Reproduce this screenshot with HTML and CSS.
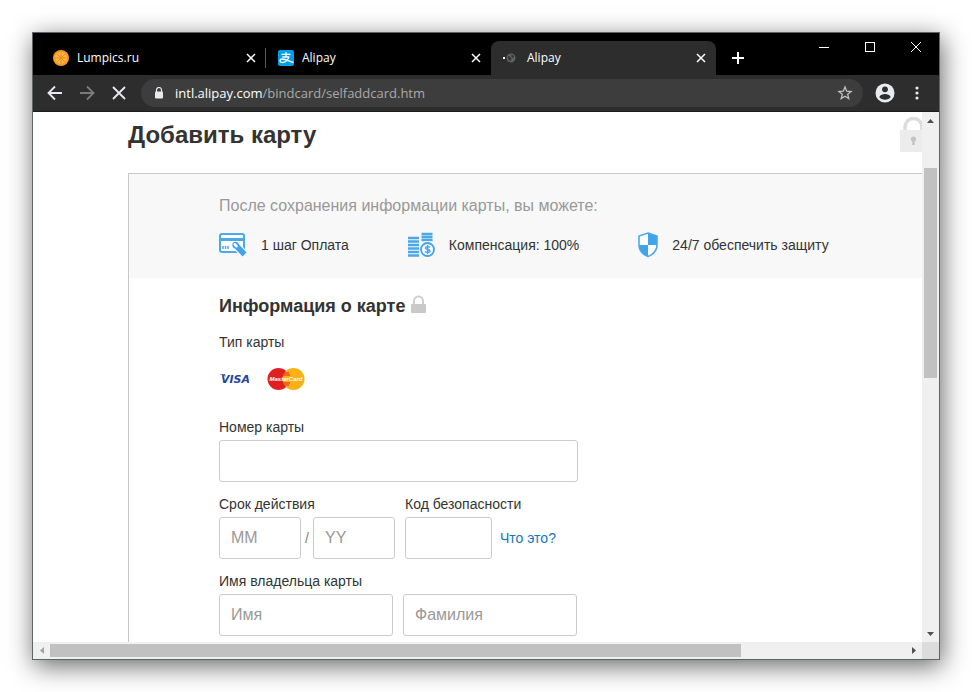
FILE: index.html
```html
<!DOCTYPE html>
<html lang="ru">
<head>
    <meta charset="UTF-8">
    <meta name="viewport" content="width=device-width, initial-scale=1.0">
    <title>Alipay</title>
    <link rel="stylesheet" href="styles.css">
</head>
<body>
    <div class="window">
        <div class="tab-strip">
            <div class="tabs">
                <div class="tab tab-divided">
                    <svg class="favicon" viewBox="0 0 16 16">
                        <circle cx="8" cy="8" r="8" fill="#f9981f"/>
                        <circle cx="8" cy="8" r="6" fill="#ffb64a"/>
                        <path d="M8 2v12M2 8h12M3.8 3.8l8.4 8.4M12.2 3.8l-8.4 8.4" stroke="#f08a10" stroke-width="1"/>
                    </svg>
                    <span class="tab-title">Lumpics.ru</span>
                    <button class="tab-close" aria-label="Закрыть вкладку">
                        <svg width="16" height="16" viewBox="0 0 16 16"><path d="M4 4l8 8M12 4l-8 8"/></svg>
                    </button>
                </div>
                <div class="tab">
                    <svg class="favicon" viewBox="0 0 16 16">
                        <rect width="16" height="16" rx="2" fill="#009fe8"/>
                        <path d="M3.5 4.3h9M8 2v5M4.3 7h7M11 7c-1 2.8-3.8 5.5-6.5 5.5-3.5 0-3-3.5 0-3.5 3 0 6.5 2.2 11 3.6" fill="none" stroke="#fff" stroke-width="1.3"/>
                    </svg>
                    <span class="tab-title">Alipay</span>
                    <button class="tab-close" aria-label="Закрыть вкладку">
                        <svg width="16" height="16" viewBox="0 0 16 16"><path d="M4 4l8 8M12 4l-8 8"/></svg>
                    </button>
                </div>
                <div class="tab tab-active">
                    <svg class="favicon" viewBox="0 0 16 16">
                        <rect x="0" y="7" width="2" height="2" fill="#fff"/>
                        <circle cx="8" cy="8" r="4.5" fill="#5f6163"/>
                        <path d="M5 6l2.5 1 1 2-1 2-2.5-2zM8.5 4.5l2.5 1.5-.5 2-2-1z" fill="#333435"/>
                    </svg>
                    <span class="tab-title">Alipay</span>
                    <button class="tab-close" aria-label="Закрыть вкладку">
                        <svg width="16" height="16" viewBox="0 0 16 16"><path d="M4 4l8 8M12 4l-8 8"/></svg>
                    </button>
                </div>
            </div>
            <button class="new-tab" aria-label="Новая вкладка">
                <svg width="16" height="16" viewBox="0 0 16 16"><path d="M8 2v12M2 8h12" stroke="#fff" stroke-width="2"/></svg>
            </button>
            <div class="window-controls">
                <button aria-label="Свернуть"><svg width="12" height="12" viewBox="0 0 12 12"><path d="M1 6.5h10"/></svg></button>
                <button aria-label="Развернуть"><svg width="12" height="12" viewBox="0 0 12 12"><rect x="1.5" y="1.5" width="9" height="9"/></svg></button>
                <button aria-label="Закрыть"><svg width="12" height="12" viewBox="0 0 12 12"><path d="M1 1l10 10M11 1L1 11"/></svg></button>
            </div>
        </div>

        <div class="toolbar">
            <div class="nav-buttons">
                <button aria-label="Назад"><svg width="16" height="16" viewBox="0 0 16 16"><path d="M15 8H2M8 1.5L1.5 8 8 14.5"/></svg></button>
                <button aria-label="Вперёд" disabled><svg width="16" height="16" viewBox="0 0 16 16"><path d="M1 8h13M8 1.5L14.5 8 8 14.5"/></svg></button>
                <button aria-label="Остановить"><svg width="16" height="16" viewBox="0 0 16 16"><path d="M2 2l12 12M14 2L2 14"/></svg></button>
            </div>
            <div class="address-bar">
                <svg width="10" height="12" viewBox="0 0 10 12">
                    <path d="M2.5 5V3a2.5 2.5 0 0 1 5 0v2" fill="none" stroke="#e8eaed" stroke-width="1.2"/>
                    <rect x="1" y="4.5" width="8" height="7" rx="1" fill="#e8eaed"/>
                </svg>
                <span class="url"><span class="url-host">intl.alipay.com</span>/bindcard/selfaddcard.htm</span>
                <button class="bookmark" aria-label="Добавить в закладки">
                    <svg width="16" height="16" viewBox="0 0 16 16"><path d="M8 2l1.7 4.2 4.4.3-3.4 2.8 1.1 4.3L8 11.3l-3.8 2.3 1.1-4.3-3.4-2.8 4.4-.3z" fill="none" stroke="#c0c2c4" stroke-width="1.3"/></svg>
                </button>
            </div>
            <button class="profile" aria-label="Профиль">
                <svg width="20" height="20" viewBox="0 0 20 20">
                    <circle cx="10" cy="10" r="9.5" fill="#e8eaed"/>
                    <circle cx="10" cy="6.3" r="2.9" fill="#2d2d2d"/>
                    <path d="M4.3 14c1-2.2 3.5-3 5.7-3s4.7.8 5.7 3c-1.3 1.7-3.3 2.7-5.7 2.7S5.6 15.7 4.3 14z" fill="#2d2d2d"/>
                </svg>
            </button>
            <button class="menu" aria-label="Меню">
                <svg width="4" height="14" viewBox="0 0 4 14" fill="#e8eaed"><circle cx="2" cy="2" r="1.6"/><circle cx="2" cy="7" r="1.6"/><circle cx="2" cy="12" r="1.6"/></svg>
            </button>
        </div>

        <div class="viewport">
            <main class="page">
                <header class="page-header">
                    <h1>Добавить карту</h1>
                    <svg class="secure-lock" width="27" height="36" viewBox="0 0 27 36">
                        <path d="M5 14V10a8.500 8.500 0 0 1 17 0v4" fill="none" stroke="#dcdcdc" stroke-width="3.5"/>
                        <rect y="13" width="27" height="22" rx="1" fill="#ececec"/>
                        <circle cx="13.5" cy="22" r="2.6" fill="#c4c4c4"/>
                        <path d="M12.3 22h2.4v6h-2.4z" fill="#c4c4c4"/>
                    </svg>
                </header>
                <div class="panel">
                    <section class="benefits">
                        <p class="benefits-title">После сохранения информации карты, вы можете:</p>
                        <ul class="benefits-list">
                            <li>
                                <svg width="28" height="26" viewBox="0 0 28 26">
                                    <rect x="1" y="2" width="24" height="18" rx="2" fill="#fff" stroke="#4ba9ea" stroke-width="2"/>
                                    <path d="M1 7.5h24" stroke="#4ba9ea" stroke-width="3"/>
                                    <path d="M4 14v3M6.5 14v3M9 14v3" stroke="#4ba9ea" stroke-width="1.5"/>
                                    <path d="M16.5 13L25 22" stroke="#f8f8f8" stroke-width="8"/>
                                    <path d="M16.5 13L25.5 22.5" stroke="#3fa4ec" stroke-width="5.5"/>
                                    <circle cx="16.5" cy="13" r="3.2" fill="#3fa4ec"/>
                                    <path d="M15.8 12.300l1.700 1.900" stroke="#fff" stroke-width="2.6" stroke-linecap="round"/>
                                </svg>
                                1 шаг Оплата
                            </li>
                            <li>
                                <svg width="27" height="26" viewBox="0 0 27 26">
                                    <path d="M0 6h11M0 9.5h11M0 13h11M0 16.5h11M0 20h11M0 23.5h11M13.5 2h11M13.5 5h11M13.5 8h11" stroke="#4ba9ea" stroke-width="2.4"/>
                                    <circle cx="19.5" cy="17.5" r="8.5" fill="#f8f8f8"/>
                                    <circle cx="19.5" cy="17.5" r="6.5" fill="#f8f8f8" stroke="#3fa4ec" stroke-width="1.8"/>
                                    <path d="M22 15.5c-.7-1.2-4.6-1.3-4.6.5 0 2 4.6 1 4.6 3 0 1.9-4.3 1.8-5 .4M19.6 13v9" fill="none" stroke="#3fa4ec" stroke-width="1.3"/>
                                </svg>
                                Компенсация: 100%
                            </li>
                            <li>
                                <svg width="20" height="26" viewBox="0 0 20 26">
                                    <path d="M10 1l9 3v9c0 6-4 9.5-9 11.5C5 22.5 1 19 1 13V4z" fill="#fff"/>
                                    <path d="M10 1l9 3v9h-9zM10 13v11.5C5 22.5 1 19 1 13z" fill="#3fa4ec"/>
                                    <path d="M10 1l9 3v9c0 6-4 9.5-9 11.5C5 22.5 1 19 1 13V4z" fill="none" stroke="#4ba9ea" stroke-width="1.6"/>
                                </svg>
                                24/7 обеспечить защиту
                            </li>
                        </ul>
                    </section>

                    <form class="card-form">
                        <h2>
                            Информация о карте
                            <svg width="15" height="22" viewBox="0 0 15 22">
                                <path d="M3 9V6a4.5 4.5 0 0 1 9 0v3" fill="none" stroke="#cfcfcf" stroke-width="2"/>
                                <rect y="9" width="15" height="9" rx="1" fill="#c9c9c9"/>
                            </svg>
                        </h2>
                        <p class="label">Тип карты</p>
                        <div class="card-types">
                            <svg width="30" height="24" viewBox="0 0 30 24" role="img" aria-label="Visa">
                                <text class="visa-text" x="2" y="16">VISA</text>
                                <path d="M1 7h5l1 3c-1.5-1.5-3.5-2.3-6-2.5z" fill="#6c6a94"/>
                            </svg>
                            <svg width="38" height="24" viewBox="0 0 38 24" role="img" aria-label="MasterCard">
                                <circle cx="11.5" cy="12" r="11" fill="#e02020"/>
                                <circle cx="26.5" cy="12" r="11" fill="#fbb116"/>
                                <path d="M17 6h5M16 8h7M16 16h7M17 18h5" stroke="#e02020"/>
                                <text class="mastercard-text" x="19" y="14">MasterCard</text>
                            </svg>
                        </div>

                        <div class="field">
                            <label for="cardNumber">Номер карты</label>
                            <input type="text" id="cardNumber" class="input-full">
                        </div>

                        <div class="row">
                            <div class="field">
                                <label for="expMonth">Срок действия</label>
                                <div class="field-inputs">
                                    <input type="text" id="expMonth" class="input-date" placeholder="MM">
                                    <span class="slash">/</span>
                                    <input type="text" class="input-date" placeholder="YY" aria-label="Год">
                                </div>
                            </div>
                            <div class="field">
                                <label for="cvv">Код безопасности</label>
                                <div class="field-inputs">
                                    <input type="text" id="cvv" class="input-code">
                                    <a href="#" class="help-link">Что это?</a>
                                </div>
                            </div>
                        </div>

                        <div class="field">
                            <label for="firstName">Имя владельца карты</label>
                            <div class="field-inputs name-inputs">
                                <input type="text" id="firstName" class="input-name" placeholder="Имя">
                                <input type="text" class="input-name" placeholder="Фамилия" aria-label="Фамилия">
                            </div>
                        </div>
                    </form>
                </div>
            </main>

            <div class="scrollbar scrollbar-y">
                <span class="arrow"><svg width="7" height="4" viewBox="0 0 7 4"><path d="M0 4h7L3.5 0z"/></svg></span>
                <div class="track"><div class="thumb"></div></div>
                <span class="arrow"><svg width="7" height="4" viewBox="0 0 7 4"><path d="M0 0h7L3.5 4z"/></svg></span>
            </div>
            <div class="scrollbar scrollbar-x">
                <span class="arrow arrow-disabled"><svg width="4" height="7" viewBox="0 0 4 7"><path d="M4 0v7L0 3.5z"/></svg></span>
                <div class="track"><div class="thumb"></div></div>
                <span class="arrow"><svg width="4" height="7" viewBox="0 0 4 7"><path d="M0 0v7l4-3.5z"/></svg></span>
            </div>
            <div class="scroll-corner"></div>
        </div>
    </div>
</body>
</html>
```

FILE: styles.css
```css
* {
    box-sizing: border-box;
}

body {
    margin: 0;
    padding: 32px;
    height: 100vh;
    display: flex;
    background-color: #fff;
    color: #333;
    font-family: "Liberation Sans", Arial, sans-serif;
    font-size: 14px;
    line-height: 20px;
}

h1, h2, p, ul {
    margin: 0;
    padding: 0;
}

button {
    display: flex;
    align-items: center;
    justify-content: center;
    padding: 0;
    border: none;
    background: none;
}

svg {
    flex-shrink: 0;
}

.window {
    flex: 1;
    min-width: 0;
    display: flex;
    flex-direction: column;
    border: 1px solid #5f6466;
    background-color: #fff;
    box-shadow: 2px 6px 24px rgba(0, 0, 0, 0.6);
}

/* Tabs */
.tab-strip {
    display: flex;
    height: 42px;
    background-color: #000;
    font-family: "Open Sans", "Noto Sans", sans-serif;
    font-size: 12px;
    color: #fff;
}

.tabs {
    display: flex;
    align-items: flex-end;
    padding-left: 8px;
    flex: 0 1 683px;
    min-width: 0;
}

.tab {
    flex: 1;
    min-width: 0;
    height: 34px;
    display: flex;
    align-items: center;
    gap: 8px;
    padding: 0 7px 0 12px;
}

.tab-divided {
    background: linear-gradient(#55585a, #55585a) right center / 1px 20px no-repeat;
}

.tab-active {
    background-color: #2d2d2d;
    border-radius: 8px 8px 0 0;
}

.favicon {
    width: 16px;
    height: 16px;
}

.tab-title {
    flex: 1;
}

.tab-close svg {
    stroke: #fff;
    stroke-width: 1.5;
}

.new-tab {
    width: 28px;
    height: 34px;
    margin: 8px 0 0 8px;
}

.window-controls {
    display: flex;
    margin-left: auto;
}

.window-controls button {
    width: 46px;
    height: 28px;
}

.window-controls svg {
    fill: none;
    stroke: #fff;
}

/* Toolbar */
.toolbar {
    display: flex;
    align-items: center;
    height: 37px;
    padding-right: 20px;
    background-color: #2d2d2d;
    border-bottom: 1px solid #1c1c1c;
}

.nav-buttons {
    display: flex;
    padding: 0 6px;
}

.nav-buttons button {
    width: 32px;
    height: 32px;
}

.nav-buttons svg {
    fill: none;
    stroke: #e8eaed;
    stroke-width: 1.8;
}

.nav-buttons button:disabled svg {
    stroke: #7c7c7c;
}

.address-bar {
    flex: 1;
    display: flex;
    align-items: center;
    gap: 11px;
    height: 28px;
    padding: 0 10px 0 13px;
    border-radius: 14px;
    background-color: #3d3d3d;
    font-family: "Open Sans", "Noto Sans", sans-serif;
    font-size: 13px;
}

.url {
    flex: 1;
    color: #aaa;
}

.url-host {
    color: #fff;
}

.profile {
    margin: 0 20px 0 12px;
}

/* Page view */
.viewport {
    flex: 1;
    min-height: 0;
    display: grid;
    grid-template: minmax(0, 1fr) 17px / minmax(0, 1fr) 17px;
}

.page {
    display: flex;
    flex-direction: column;
    overflow: hidden;
    padding-left: 95px;
}

.page-header {
    flex-shrink: 0;
    display: flex;
    justify-content: space-between;
    height: 61px;
    padding-top: 5px;
    margin-right: -5px;
}

.page-header h1 {
    font-size: 24px;
    line-height: 36px;
}

.panel {
    flex: 1 0 auto;
    border: 1px solid #c8c8c8;
    border-width: 1px 0 0 1px;
}

.benefits {
    padding: 20px 0 20px 90px;
    background-color: #f8f8f8;
}

.benefits-title {
    color: #999;
    font-size: 16px;
    line-height: 24px;
}

.benefits-list {
    display: flex;
    gap: 59px;
    margin-top: 14px;
    list-style: none;
    white-space: nowrap;
}

.benefits-list li {
    display: flex;
    align-items: center;
    gap: 14px;
}

.card-form {
    padding: 14px 0 0 90px;
}

.card-form h2 {
    display: flex;
    align-items: center;
    gap: 6px;
    font-size: 18px;
    line-height: 28px;
}

.label {
    margin-top: 12px;
}

.card-types {
    display: flex;
    gap: 18px;
    margin: 15px 0 26px;
}

.visa-text {
    font: italic bold 11px "DejaVu Sans", sans-serif;
    fill: #26459b;
}

.mastercard-text {
    font: italic bold 6px "Liberation Sans", sans-serif;
    fill: #fff;
    text-anchor: middle;
}

.field {
    display: flex;
    flex-direction: column;
    gap: 3px;
    margin-bottom: 12px;
}

.field-inputs,
.row {
    display: flex;
    align-items: center;
}

.row {
    gap: 10px;
}

.name-inputs {
    gap: 10px;
}

.card-form input {
    height: 42px;
    padding: 0 11px;
    border: 1px solid #ccc;
    border-radius: 3px;
    background-color: #fff;
    color: #333;
    font-family: inherit;
    font-size: 16px;
}

.card-form input::placeholder {
    color: #999;
}

.card-form .input-full {
    width: 359px;
}

.card-form .input-date {
    width: 82px;
}

.card-form .input-code {
    width: 87px;
}

.card-form .input-name {
    width: 174px;
}

.slash {
    width: 12px;
    text-align: center;
    color: #808080;
}

.help-link {
    margin-left: 8px;
    color: #1a75bb;
    text-decoration: none;
}

/* Scrollbars */
.scrollbar {
    display: flex;
    background-color: #f0f0f0;
}

.scrollbar-y {
    flex-direction: column;
}

.arrow {
    width: 17px;
    height: 17px;
    display: flex;
    align-items: center;
    justify-content: center;
    fill: #505050;
}

.arrow-disabled {
    fill: #a3a3a3;
}

.track {
    flex: 1;
    display: grid;
}

.scrollbar-y .track {
    grid-template-rows: 39fr 210fr 247fr;
    padding: 0 2px;
}

.scrollbar-y .thumb {
    grid-row: 2;
}

.scrollbar-x .track {
    grid-template-columns: 691fr 164fr;
    padding: 2px 0;
}

.thumb {
    background-color: #c1c1c1;
}

.scroll-corner {
    background-color: #dcdcdc;
}
```
